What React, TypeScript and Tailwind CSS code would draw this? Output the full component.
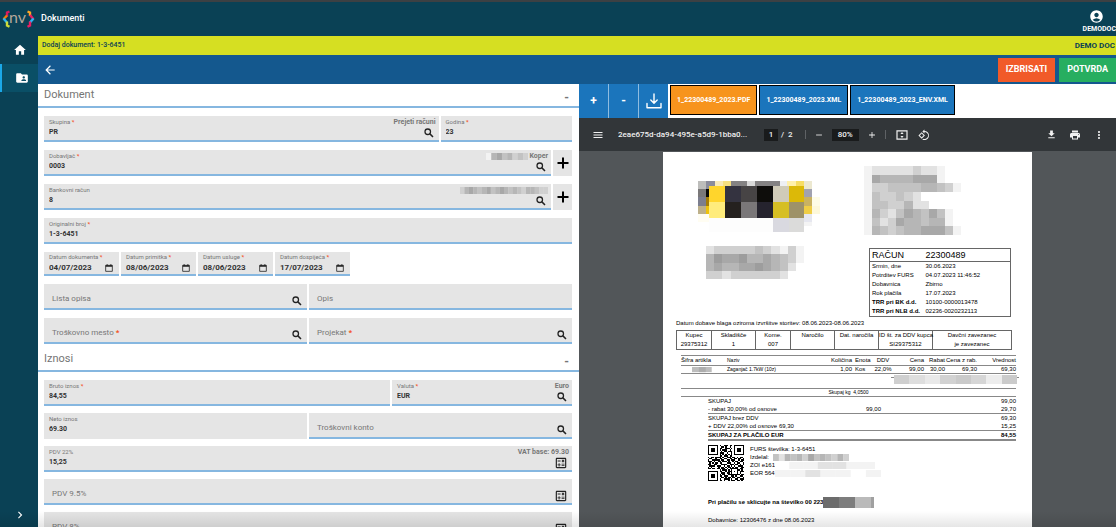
import { useState } from 'react'
import type { ReactNode } from 'react'
import {
  MdAccountCircle, MdAdd, MdArrowBack, MdChevronRight, MdDownload, MdFolderShared, MdHome, MdMenu,
  MdMoreVert, MdOutlineCalculate, MdPrint, MdRemove,
} from 'react-icons/md'

type FieldProps = {
  id: string
  label: string
  value?: string
  required?: boolean
  hint?: ReactNode
  icon?: 'search' | 'calc'
  plain?: boolean
  className?: string
}

const TABS = ['1_22300489_2023.PDF', '1_22300489_2023.XML', '1_22300489_2023_ENV.XML']

const DATES = [
  { id: 'datum-dokumenta', label: 'Datum dokumenta', value: '04/07/2023' },
  { id: 'datum-primitka', label: 'Datum primitka', value: '08/06/2023' },
  { id: 'datum-usluge', label: 'Datum usluge', value: '08/06/2023' },
  { id: 'datum-dospijeca', label: 'Datum dospijeća', value: '17/07/2023' },
]

const INVOICE_META = [
  ['Srmin, dne', '30.06.2023'],
  ['Potrditev FURS', '04.07.2023 11:46:52'],
  ['Dobavnica', 'Zbirno'],
  ['Rok plačila', '17.07.2023'],
  ['TRR pri BK d.d.', '10100-0000013478'],
  ['TRR pri NLB d.d.', '02236-0020232113'],
]

const BUYER = [
  ['Kupec', '29375312'],
  ['Skladišče', '1'],
  ['Kome.', '007'],
  ['Naročilo', ''],
  ['Dat. naročila', ''],
  ['ID št. za DDV kupca', 'SI29375312'],
  ['Davčni zavezanec', 'je zavezanec'],
]

// [x, y, w, h, fill]
type Cell = [number, number, number, number, string]

const LOGO_CELLS: Cell[] = [
  [0, 0, 24, 25, '#bdbdbb'], [24, 0, 25, 25, '#8b8c9b'], [49, 0, 24, 25, '#f8e9b8'], [73, 0, 25, 25, '#f6df80'],
  [98, 0, 49, 25, '#848283'], [147, 0, 25, 25, '#d9d9d9'], [172, 0, 73, 25, '#848283'], [245, 0, 24, 25, '#eef0f5'],
  [269, 0, 25, 25, '#fff0ac'], [294, 0, 24, 25, '#f7dd64'], [318, 0, 26, 25, '#ece8d0'],
  [0, 25, 24, 24, '#7a7879'], [24, 25, 12, 24, '#0c0b08'], [0, 49, 24, 25, '#7c7e8e'], [24, 49, 12, 25, '#a47d08'],
  [0, 74, 24, 25, '#bdb08a'], [24, 74, 12, 25, '#eec20c'], [318, 25, 26, 24, '#a1a2b0'], [318, 49, 26, 25, '#c9b262'],
  [318, 74, 26, 25, '#efcd45'], [318, 99, 26, 25, '#e6e7ef'], [318, 124, 26, 12, '#f4f4f4'], [344, 49, 24, 25, '#fefce6'],
  [344, 74, 24, 25, '#fdf8da'], [0, 99, 33, 24, '#fffdf2'], [33, 112, 192, 42, '#fdfdfd'],
  [33, 16, 48, 48, '#ffd52c'], [81, 16, 48, 48, '#343340'], [129, 16, 48, 48, '#474445'], [177, 16, 48, 48, '#0e0d0b'],
  [225, 16, 48, 48, '#d0cbb8'], [273, 16, 45, 48, '#dcb908'], [33, 64, 48, 48, '#ffec7c'], [81, 64, 48, 48, '#25211f'],
  [129, 64, 48, 48, '#7a7779'], [177, 64, 48, 48, '#25232e'], [225, 64, 48, 48, '#d6bf24'], [273, 64, 45, 48, '#9e9268'],
  [225, 112, 48, 42, '#d9d9e0'], [273, 112, 45, 42, '#dbdbda'],
]

// each row is a run of grey levels, one character per cell ('0' darkest, '9' white)
const SENDER_ROWS = ['877777677899', '834444333899', '866555544568', '856656799999', '855664779999', '846753453589', '857634454489', '845654433358']
const ADDRESS_ROWS = ['766666567868', '423324434568', '434433234579', '667666666799']
const GREYS = ['#8a8a8a', '#949494', '#9d9d9d', '#a8a8a8', '#b6b6b6', '#c2c2c2', '#d0d0d0', '#e2e2e2', '#f3f3f3', '#ffffff']

const QR = [
  '1111111010011101101111111', '1000001001101001001000001', '1011101011001110101011101', '1011101010111001001011101',
  '1011101001011011101011101', '1000001011100100101000001', '1111111010101010101111111', '0000000011011101100000000',
  '1011011110100111011010110', '0110010011011001101101101', '1001111101100110111001011', '1110100110111010010110110',
  '0101011011000111001011001', '1100110001111001110110101', '0111101110010110101001110', '1010000101101011010110011',
  '1101101101110101111110110', '0000000010111010100011010', '1111111011001011101010111', '1000001001110110100010100',
  '1011101010110011111111011', '1011101011011100110100110', '1011101001101011011011001', '1000001010011110100110111',
  '1111111011010010111011010',
]

function CalendarIcon() {
  return (
    <svg viewBox="0 0 12 12" className="size-2 shrink-0" aria-hidden>
      <path d="M1 2h10v9H1z" fill="none" stroke="#222" strokeWidth="1.2" />
      <path d="M1 2h10v2H1zM2.400.4h1.600v2H2.400zM8 .4h1.600v2H8z" fill="#222" />
    </svg>
  )
}

function SearchIcon({ className }: { className: string }) {
  return (
    <svg viewBox="0 0 24 24" className={className} fill="none" stroke="currentColor" aria-hidden>
      <circle cx="9.500" cy="9.500" r="5.500" strokeWidth="2.600" />
      <path d="M13.800 13.800L20 20" strokeWidth="3" />
    </svg>
  )
}

function Label({ id, text, required, big }: { id: string; text: string; required?: boolean; big?: boolean }) {
  return (
    <label htmlFor={id} className={big ? 'shrink-0 text-[8px] leading-3 text-[#777]' : 'block text-[6px] leading-2 text-[#777]'}>
      {text}
      {required && <span className="font-bold text-[#f4511e]"> *</span>}
    </label>
  )
}

function Field({ id, label, value, required, hint, icon, plain, className = 'flex-1' }: FieldProps) {
  const filled = value !== undefined
  return (
    <div className={`flex h-[26px] min-w-0 bg-[#e5e5e5] ${plain ? '' : 'border-b-2 border-[#86b7e0]'} ${className}`}>
      {filled ? (
        <div className="min-w-0 flex-1 pt-[2px] pl-[5px]">
          <Label id={id} text={label} required={required} />
          <input id={id} defaultValue={value} className="block h-3 w-full bg-transparent text-[7px] font-bold text-[#333] outline-none" />
        </div>
      ) : (
        <div className="flex min-w-0 flex-1 items-center gap-1 pt-[6px] pl-2">
          <Label id={id} text={label} required={required} big />
          <input id={id} className="h-3 w-full min-w-0 bg-transparent text-[8px] outline-none" />
        </div>
      )}
      {(hint || icon) && (
        <div className="flex shrink-0 flex-col items-end justify-end pr-[3px]">
          {hint && <span className="text-[7px] leading-2 font-bold text-[#777]">{hint}</span>}
          {icon && (
            <button type="button" aria-label={label} className="mr-px text-[#222]">
              {icon === 'calc' ? <MdOutlineCalculate className="size-[14px]" /> : <SearchIcon className="my-px size-3" />}
            </button>
          )}
        </div>
      )}
    </div>
  )
}

function Section({ title, dense, children }: { title: string; dense?: boolean; children: ReactNode }) {
  return (
    <section className="pb-1">
      <header className="flex h-6 items-center justify-between border-b-2 border-[#86b7e0] pr-[10px] pl-[6px] text-[#757575]">
        <h2 className="text-[11px]">{title}</h2>
        <button type="button" className="pt-[6px] text-[12px] leading-3 font-bold">-</button>
      </header>
      <div className={`flex flex-col pt-2 pr-[7px] pl-[6px] ${dense ? 'gap-[7px]' : 'gap-2'}`}>{children}</div>
    </section>
  )
}

function AddButton({ label }: { label: string }) {
  return (
    <button type="button" aria-label={label} className="flex w-[19px] items-center justify-center bg-[#e5e5e5] text-black">
      <svg viewBox="0 0 12 12" className="size-3" aria-hidden>
        <path d="M6 .5v11M.5 6h11" stroke="currentColor" strokeWidth="2" />
      </svg>
    </button>
  )
}

function Blur({ cells }: { cells: string }) {
  return (
    <svg viewBox={`0 0 ${cells.length} 2`} preserveAspectRatio="none" className="h-[7px] w-full" aria-hidden>
      {[...cells].map((c, i) => <rect key={i} x={i} width={1.02} height={2} fill={GREYS[Number(c)]} />)}
    </svg>
  )
}

function Mosaic({ rows, className }: { rows: string[]; className: string }) {
  return (
    <svg viewBox={`0 0 ${rows[0].length} ${rows.length}`} preserveAspectRatio="none" className={className} shapeRendering="crispEdges" aria-hidden>
      {rows.map((row, y) => [...row].map((c, x) => <rect key={`${x}-${y}`} x={x} y={y} width={1} height={1} fill={GREYS[Number(c)]} />))}
    </svg>
  )
}

function BrandLogo() {
  return (
    <svg viewBox="0 -3 33 24" className="h-6 w-[33px]" aria-label="nv">
      <g fill="none" strokeWidth="2.4">
        <path d="M7.500 1.500L5 2.500V6.500" stroke="#d81b60" />
        <path d="M5 5.500L1.500 9.200" stroke="#f57c00" />
        <path d="M1.500 8.500L5 12.500" stroke="#29b6f6" />
        <path d="M5 11.500v4L7.500 16.800" stroke="#cddc39" />
        <path d="M25.500 1.500L28 2.500V6" stroke="#ffa726" />
        <path d="M28 5L31.500 9.200" stroke="#e91e63" />
        <path d="M31.500 8.500L28 12.500" stroke="#29b6f6" />
        <path d="M28 11.500v4L25.500 16.800" stroke="#e91e63" />
      </g>
      <text x="7" y="13" fontSize="16" fontFamily="Lato, sans-serif" fill="#b5a79b">nv</text>
    </svg>
  )
}

function FormPanel() {
  return (
    <form className="min-w-0 overflow-hidden bg-white">
      <Section title="Dokument">
        <div className="flex gap-[2px]">
          <Field id="skupina" label="Skupina" value="PR" required hint="Prejeti računi" icon="search" className="flex-[3]" />
          <Field id="godina" label="Godina" value="23" required />
        </div>
        <div className="flex gap-[2px]">
          <Field id="dobavljac" label="Dobavljač" value="0003" required icon="search" hint={<span className="flex w-[62px] items-center gap-px"><Blur cells="84354656" />Koper</span>} />
          <AddButton label="Dodaj dobavljača" />
        </div>
        <div className="flex gap-[2px]">
          <Field id="bankovni-racun" label="Bankovni račun" value="8" icon="search" hint={<span className="flex w-[88px]"><Blur cells="64345435434545644566" /></span>} />
          <AddButton label="Dodaj bankovni račun" />
        </div>
        <Field id="originalni-broj" label="Originalni broj" value="1-3-6451" required className="w-full" />
        <div className="flex gap-[2px]">
          {DATES.map((d) => (
            <div key={d.id} className="h-6 w-[75px] border-b-2 border-[#86b7e0] bg-[#e5e5e5] pt-px pl-[5px]">
              <Label id={d.id} text={d.label} required />
              <div className="flex items-center justify-between pt-px pr-[6px]">
                <input id={d.id} defaultValue={d.value} className="h-3 w-12 bg-transparent text-[8px] font-bold text-[#333] outline-none" />
                <CalendarIcon />
              </div>
            </div>
          ))}
        </div>
        <div className="flex gap-[2px]">
          <Field id="lista-opisa" label="Lista opisa" icon="search" />
          <Field id="opis" label="Opis" />
        </div>
        <div className="flex gap-[2px]">
          <Field id="troskovno-mesto" label="Troškovno mesto" required icon="search" />
          <Field id="projekat" label="Projekat" required icon="search" />
        </div>
      </Section>
      <Section title="Iznosi" dense>
        <div className="flex gap-[2px]">
          <Field id="bruto" label="Bruto iznos" value="84,55" required className="flex-[25]" />
          <Field id="valuta" label="Valuta" value="EUR" required hint="Euro" icon="search" className="flex-[13]" />
        </div>
        <div className="flex gap-[2px]">
          <Field id="neto" label="Neto iznos" value="69.30" plain />
          <Field id="konto" label="Troškovni konto" icon="search" />
        </div>
        <Field id="pdv-22" label="PDV 22%" value="15,25" hint="VAT base: 69.30" icon="calc" className="w-full" />
        <Field id="pdv-95" label="PDV 9.5%" icon="calc" className="w-full" />
        <Field id="pdv-8" label="PDV 8%" icon="calc" className="w-full" />
      </Section>
    </form>
  )
}

function TotalRow({ label, mid, value, className = '' }: { label: string; mid?: string; value: string; className?: string }) {
  return (
    <div className={`flex leading-2 ${className}`}>
      <span className="w-[158px] shrink-0">{label}</span>
      <span>{mid}</span>
      <span className="ml-auto">{value}</span>
    </div>
  )
}

function InvoicePage() {
  return (
    <article className="mx-auto w-[369px] shrink-0 bg-white px-[13px] pt-[14px] pb-10 font-['Liberation_Sans',Arial,sans-serif] text-[6px] leading-[9px] text-black">
      <div className="flex justify-between">
        <div className="flex flex-col gap-[14px] pt-[15px] pl-[22px]">
          <svg viewBox="0 0 384 154" className="h-[51px] w-[128px]" shapeRendering="crispEdges" aria-hidden>
            {LOGO_CELLS.map(([x, y, w, h, fill]) => <rect key={`${x}-${y}`} x={x} y={y} width={w} height={h} fill={fill} />)}
          </svg>
          <Mosaic rows={ADDRESS_ROWS} className="ml-2 h-[33px] w-[98px]" />
        </div>
        <div className="mr-2 w-[147px]">
          <Mosaic rows={SENDER_ROWS} className="h-[69px] w-[97px]" />
          <table className="mt-[13px] ml-[5px] w-[142px] border border-[#666]">
            <thead>
              <tr className="border-b border-[#666] text-left text-[9px] leading-3">
                <th className="w-[56px] pl-[2px] font-normal">RAČUN</th>
                <th className="font-normal">22300489</th>
              </tr>
            </thead>
            <tbody>
              {INVOICE_META.map(([k, v]) => (
                <tr key={k}>
                  <td className={`pl-[2px] whitespace-nowrap ${k.startsWith('TRR') ? 'font-bold' : ''}`}>{k}</td>
                  <td>{v}</td>
                </tr>
              ))}
            </tbody>
          </table>
        </div>
      </div>
      <p className="mt-[2px]">Datum dobave blaga oziroma izvršitve storitev: 08.06.2023-08.06.2023</p>
      <table className="mt-[2px] w-[336px] table-fixed border border-[#666] text-center">
        <colgroup>
          <col className="w-[35px]" /><col className="w-[44px]" /><col className="w-[35px]" /><col className="w-[44px]" />
          <col className="w-[44px]" /><col className="w-[54px]" /><col />
        </colgroup>
        <tbody>
          <tr>
            {BUYER.map(([k, v]) => (
              <td key={k} className="border-r border-[#666] align-top whitespace-nowrap">{k}<br />{v}</td>
            ))}
          </tr>
        </tbody>
      </table>
      <div className="pt-[5px] pl-[5px]">
        <table className="w-[335px] table-fixed text-right">
          <colgroup>
            <col className="w-[46px]" /><col className="w-[92px]" /><col className="w-[33px]" /><col className="w-[20px]" /><col className="w-[22px]" />
            <col className="w-[30px]" /><col className="w-[21px]" /><col className="w-[32px]" /><col />
          </colgroup>
          <thead>
            <tr className="border-y border-[#888] whitespace-nowrap *:font-normal">
              <th className="text-left">Šifra artikla</th>
              <th className="text-left text-[5px]">Naziv</th>
              <th>Količina</th>
              <th className="pl-[3px] text-left">Enota</th>
              <th className="text-center">DDV</th>
              <th>Cena</th>
              <th>Rabat</th>
              <th>Cena z rab.</th>
              <th>Vrednost</th>
            </tr>
          </thead>
          <tbody>
            <tr className="border-b border-[#888] leading-[7px] whitespace-nowrap">
              <td><svg viewBox="0 0 46 7" className="h-[6px] w-[46px]" aria-hidden><path d="M9 0h23v6H9z" fill="#bdbdbd" /><path d="M17 0h8v6H17z" fill="#adadad" /></svg></td>
              <td className="text-left text-[5px]">Zaganjač 1.7kW (10z)</td>
              <td>1,00</td>
              <td className="pl-[3px] text-left">Kos</td>
              <td className="text-center">22,0%</td>
              <td>99,00</td>
              <td>30,00</td>
              <td>69,30</td>
              <td>69,30</td>
            </tr>
          </tbody>
        </table>
        <svg viewBox="0 0 128 10" className="ml-auto h-[10px] w-[128px]" shapeRendering="crispEdges" aria-hidden>
          <path d="M0 3h128" stroke="#888" strokeWidth="1" />
          {['#cfcfcf', '#dedede', '#e9e9e9', '#d2d2d2', '#cacaca', '#d6d6d6', '#ededed', '#cbcbcb'].map((fill, i) => (
            <rect key={i} x={3 + i * 15.4} y={1} width={15.4} height={9} fill={fill} />
          ))}
        </svg>
        <div className="mt-1 w-[335px] border-y border-[#888] text-center text-[5px] leading-[7px]">Skupaj kg&nbsp; 4,0500</div>
        <div className="w-[335px] pl-[27px]">
          <TotalRow label="SKUPAJ" value="99,00" />
          <TotalRow label="- rabat 30,00% od osnove" mid="99,00" value="29,70" className="border-b border-[#888]" />
          <TotalRow label="SKUPAJ brez DDV" value="69,30" />
          <TotalRow label="+ DDV 22,00% od osnove 69,30" value="15,25" className="border-b border-[#888]" />
          <TotalRow label="SKUPAJ ZA PLAČILO EUR" value="84,55" className="border-b-2 border-[#888] font-bold" />
        </div>
        <div className="flex gap-[6px] pt-1 pl-[27px]">
          <svg viewBox="0 0 25 25" className="size-9" shapeRendering="crispEdges" role="img" aria-label="QR">
            {QR.map((row, y) => [...row].map((c, x) => c === '1' && <rect key={`${x}-${y}`} x={x} y={y} width={1} height={1} fill="#000" />))}
          </svg>
          <div className="leading-2">
            <p>FURS številka: 1-3-6451</p>
            <p className="flex items-center gap-1">Izdelal: <span className="w-[76px]"><Blur cells="5745463545646" /></span></p>
            <p className="flex items-center">ZOI e161 <span className="w-[100px]"><Blur cells="9887788" /></span></p>
            <p className="flex items-center">EOR 564 <span className="w-[106px]"><Blur cells="8878898" /></span></p>
          </div>
        </div>
        <p className="flex items-center pt-4 pl-[27px] font-bold">
          Pri plačilu se sklicujte na številko 00 223
          <svg viewBox="0 0 51 11" className="h-[11px] w-[51px]" shapeRendering="crispEdges" aria-hidden>
            <path d="M0 0h16v11H0z" fill="#6c6c6c" />
            <path d="M16 0h16v11H16z" fill="#7d7d7d" />
            <path d="M32 0h16v11H32z" fill="#bababa" />
            <path d="M48 0h3v11h-3z" fill="#a0a0a0" />
          </svg>
        </p>
        <p className="pt-2 pl-[27px]">Dobavnice: 12306476 z dne 08.06.2023</p>
      </div>
    </article>
  )
}

function PdfToolbar() {
  return (
    <div className="flex h-[33px] shrink-0 items-center bg-[#323639] px-[13px] text-[8px] font-medium text-[#f1f1f1]">
      <button type="button" aria-label="Menu"><MdMenu className="size-3" /></button>
      <span className="ml-[14px] w-[146px] truncate">2eae675d-da94-495e-a5d9-1bba0...</span>
      <input aria-label="Stranica" defaultValue="1" className="h-3 w-[14px] bg-[#191b1c] text-center outline-none" />
      <span className="ml-[3px]">/&nbsp; 2</span>
      <span className="mr-2 ml-3 h-[9px] w-px bg-[#5f6265]" />
      <button type="button" aria-label="Umanji"><MdRemove className="size-[10px]" /></button>
      <input aria-label="Zoom" defaultValue="80%" className="mx-2 h-3 w-[27px] bg-[#191b1c] text-center outline-none" />
      <button type="button" aria-label="Uvećaj"><MdAdd className="size-[10px]" /></button>
      <span className="mr-[10px] ml-2 h-[9px] w-px bg-[#5f6265]" />
      <button type="button" aria-label="Prilagodi stranici">
        <svg viewBox="0 0 12 10" className="h-[10px] w-3" aria-hidden>
          <path d="M1 .8h10v8.400H1z" fill="none" stroke="currentColor" strokeWidth="1.2" />
          <path d="M6 2l1.600 1.900H4.400zM6 8l1.600-1.900H4.400z" fill="currentColor" />
        </svg>
      </button>
      <button type="button" aria-label="Rotiraj" className="ml-[10px]">
        <svg viewBox="0 0 24 24" className="size-3" fill="currentColor" aria-hidden>
          <path d="M7.340 6.410L.86 12.900l6.490 6.480 6.490-6.480-6.500-6.490zM3.690 12.900l3.660-3.660L11 12.900l-3.660 3.660-3.650-3.660zm15.670-6.260A8.950 8.950 0 0013 4V.76L8.760 5 13 9.240V6c1.790 0 3.580.68 4.950 2.050a7.007 7.007 0 010 9.900 6.973 6.973 0 01-7.790 1.440l-1.490 1.490C10.020 21.620 11.510 22 13 22c2.300 0 4.610-.88 6.360-2.640a8.980 8.980 0 000-12.720z" />
        </svg>
      </button>
      <div className="ml-auto flex items-center gap-3">
        <button type="button" aria-label="Preuzmi"><MdDownload className="size-[11px]" /></button>
        <button type="button" aria-label="Ispis"><MdPrint className="size-3" /></button>
        <button type="button" aria-label="Više"><MdMoreVert className="-mr-[2px] size-3" /></button>
      </div>
    </div>
  )
}

function PreviewPanel() {
  const [active, setActive] = useState(TABS[0])
  const tool = 'flex w-[29px] items-center justify-center bg-[#1b75bc] text-[12px] font-bold text-white'
  return (
    <div className="flex min-w-0 flex-col overflow-hidden bg-white">
      <div className="flex h-[34px] shrink-0">
        <div className="flex gap-px bg-[#8fbce0]">
          <button type="button" className={tool}>+</button>
          <button type="button" className={tool}>-</button>
          <button type="button" aria-label="Preuzmi" className={tool}>
            <svg viewBox="0 0 16 16" className="size-4" fill="none" stroke="currentColor" strokeWidth="1.400" aria-hidden>
              <path d="M8 1v9M4.800 7L8 10.200 11.200 7M1 10.500v4.300h14v-4.300" strokeLinecap="round" strokeLinejoin="round" />
            </svg>
          </button>
        </div>
        <div className="flex gap-[2px] pt-px pb-[3px] pl-[2px]">
          {TABS.map((t) => (
            <button
              key={t}
              type="button"
              onClick={() => setActive(t)}
              className={`border border-black px-[6px] text-[7px] font-bold text-white ${t === active ? 'bg-[#f7941d]' : 'bg-[#1b75bc]'}`}
            >
              {t}
            </button>
          ))}
        </div>
      </div>
      <PdfToolbar />
      <div className="flex-1 overflow-hidden bg-[#525659] pt-px">
        <InvoicePage />
      </div>
    </div>
  )
}

export default function App() {
  return (
    <div className="relative flex h-screen flex-col overflow-hidden bg-[#0a4155] font-[Roboto,sans-serif] leading-normal">
      <header className="flex h-9 shrink-0 items-center justify-between border-t-2 border-[#3c4043] pl-[2px] text-white">
        <div className="flex items-center gap-[6px]">
          <BrandLogo />
          <h1 className="text-[9px] font-medium">Dokumenti</h1>
        </div>
        <button type="button" className="flex flex-col items-start pt-1 text-[7px] leading-[10px] font-bold">
          <MdAccountCircle className="ml-[6px] size-[15px]" />
          DEMODOC
        </button>
      </header>
      <div className="flex min-h-0 flex-1">
        <nav className="flex w-[38px] shrink-0 flex-col text-white">
          <a href="#home" aria-label="Početna" className="flex h-7 items-center justify-center pl-[2px]"><MdHome className="size-[14px]" /></a>
          <a href="#dokumenti" aria-label="Dokumenti" className="flex h-7 items-center justify-center border-l-2 border-[#1ba8e8] bg-[#0a4f66] pl-1">
            <MdFolderShared className="size-[14px]" />
          </a>
          <button type="button" aria-label="Proširi" className="mt-auto flex h-6 items-center justify-center pl-[2px]"><MdChevronRight className="size-[14px]" /></button>
        </nav>
        <main className="flex min-w-0 flex-1 flex-col">
          <div className="flex h-[19px] shrink-0 items-center justify-between bg-[#d6df22] pr-px pl-1 text-[7px] text-[#0a4155]">
            <span className="font-medium">Dodaj dokument: 1-3-6451</span>
            <span className="text-[8px] font-bold">DEMO DOC</span>
          </div>
          <div className="flex h-[29px] shrink-0 items-center justify-between bg-[#14588e] pl-[5px] text-white">
            <button type="button" aria-label="Natrag"><MdArrowBack className="size-[14px]" /></button>
            <div className="flex h-6 gap-1 text-[9px] font-bold">
              <button type="button" className="bg-[#f15a29] px-2">IZBRISATI</button>
              <button type="button" className="bg-[#27ae60] px-2">POTVRDA</button>
            </div>
          </div>
          <div className="grid min-h-0 flex-1 grid-cols-[541fr_537fr]">
            <FormPanel />
            <PreviewPanel />
          </div>
        </main>
      </div>
      <div className="pointer-events-none absolute inset-x-0 bottom-0 h-4 bg-linear-to-b from-transparent to-black/10" />
    </div>
  )
}
